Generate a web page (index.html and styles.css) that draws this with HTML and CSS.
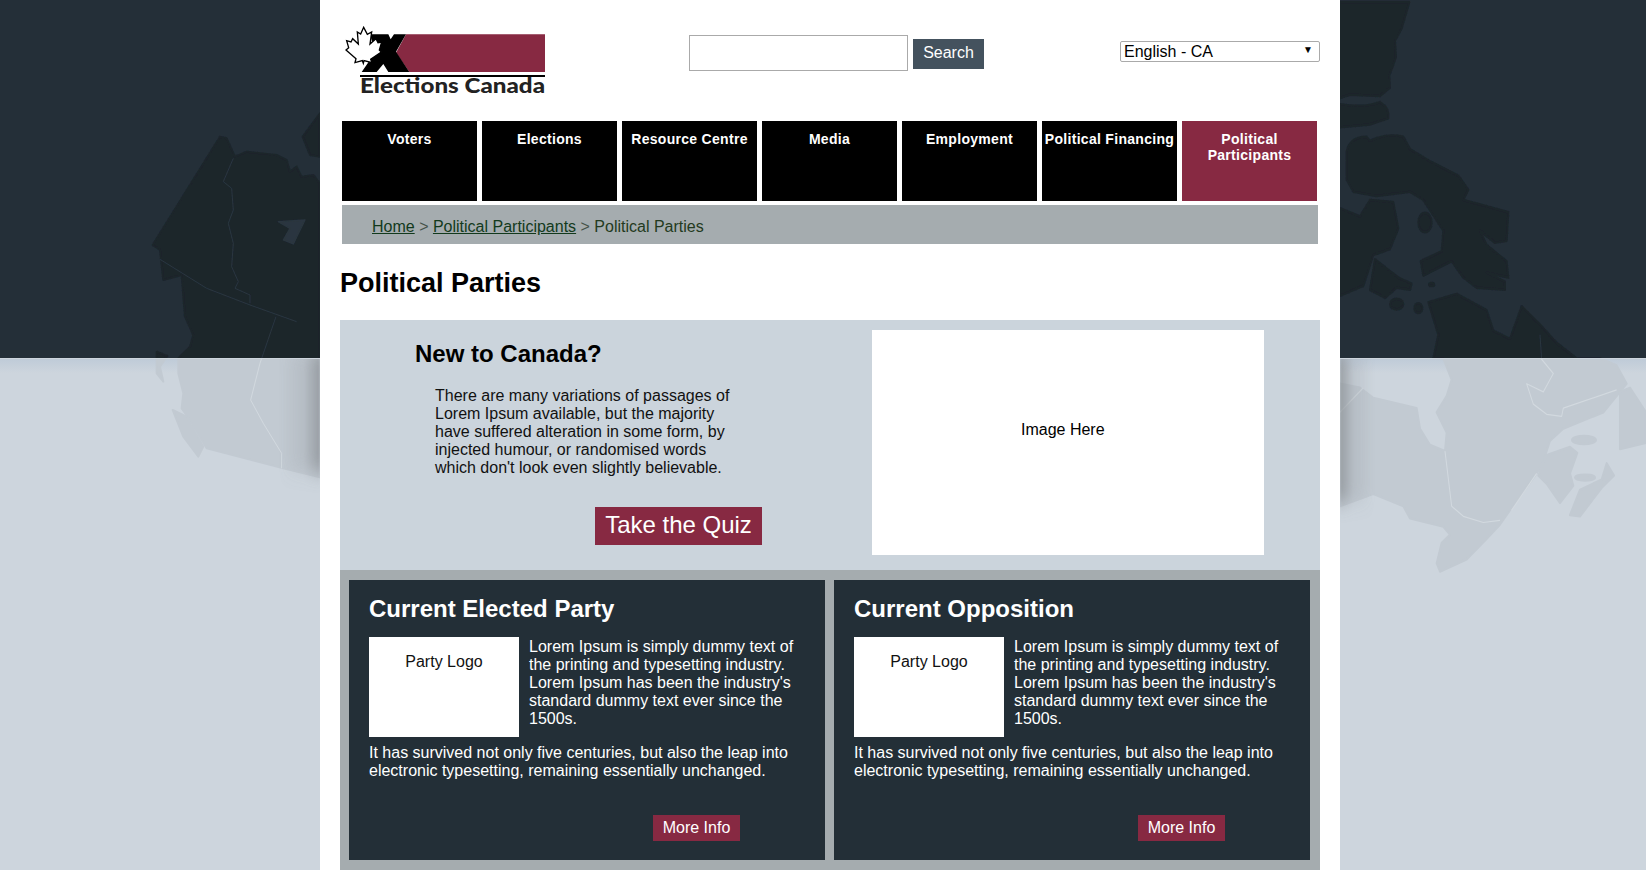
FILE: index.html
```html
<!DOCTYPE html>
<html lang="en">
<head>
<meta charset="utf-8">
<title>Political Parties - Elections Canada</title>
<link rel="stylesheet" href="styles.css">
</head>
<body>
<svg class="backdrop" width="1646" height="870" viewBox="0 0 1646 870" aria-hidden="true">
  <defs>
    <clipPath id="upper"><rect x="0" y="0" width="1646" height="358"/></clipPath>
    <clipPath id="lower"><rect x="0" y="359" width="1646" height="511"/></clipPath>
    <filter id="soft" x="-5%" y="-5%" width="110%" height="110%"><feGaussianBlur stdDeviation=".7"/></filter>
    <filter id="softY" x="-10%" y="-20%" width="120%" height="140%"><feGaussianBlur stdDeviation="1 9"/></filter>
    <linearGradient id="shadeL" x1="0" x2="1" y1="0" y2="0"><stop offset="0" stop-color="#8b9095" stop-opacity="0"/><stop offset=".6" stop-color="#8b9095" stop-opacity=".22"/><stop offset="1" stop-color="#8b9095" stop-opacity=".75"/></linearGradient>
    <linearGradient id="shadeR" x1="1" x2="0" y1="0" y2="0"><stop offset="0" stop-color="#8b9095" stop-opacity="0"/><stop offset=".6" stop-color="#8b9095" stop-opacity=".22"/><stop offset="1" stop-color="#8b9095" stop-opacity=".75"/></linearGradient>
    <linearGradient id="fadeTop" x1="0" x2="0" y1="0" y2="1"><stop offset="0" stop-color="#bfcbd8"/><stop offset="1" stop-color="#bfcbd8" stop-opacity="0"/></linearGradient>
    <g id="land">
      <g transform="translate(0,100) scale(.3333)">
        <path d="M660 110L680 115L705 170L740 155L830 165L860 180L870 215L890 200L905 230L940 225L960 250V1132L850 1105L620 1045L605 1020L570 960L545 925L550 880L535 820L535 775L570 740L580 705L555 650L545 525L490 540L480 450L458 435Z"/>
        <path d="M518 930L560 950L610 1040L595 1070L550 1010Z"/>
        <path d="M470 755L502 768L480 800L490 845L470 820Z"/>
        <path d="M960 40L908 110L930 165L960 170Z"/>
      </g>
      <g transform="translate(1330,0) scale(.3333,.4082)">
        <path d="M30 5H238L215 70L195 100L198 140L178 185L180 215L150 235L60 232L30 240Z"/>
        <path d="M30 255Q100 265 150 250Q180 265 175 290L120 305L30 312Z"/>
        <path d="M50 370Q60 335 110 335L120 345Q170 325 220 335L240 365L300 395L385 430L415 465L400 490L470 505L535 520L530 590L495 595L450 565L470 600L530 640L535 680L470 668L525 690L525 710L440 705L400 680L365 640L280 675L272 640L335 615L340 565L280 490L240 470L140 480L70 470L50 440Z"/>
        <path d="M30 510L90 530L120 490L190 495L205 560L180 610L130 625L100 700L30 725Z"/>
        <path d="M135 635L205 680L245 695L240 710L200 705L165 730L120 710Z"/>
        <ellipse cx="200" cy="745" rx="20" ry="13"/>
        <circle cx="265" cy="755" r="12"/>
        <ellipse cx="285" cy="545" rx="20" ry="24"/>
        <ellipse cx="305" cy="697" rx="8" ry="4"/>
        <path d="M295 740L380 720L470 760L490 810L540 830L575 750L630 795L680 840L740 878H810L860 895L890 940L870 960L820 1010L700 1050L660 1080L640 1130L620 1160L540 1250L510 1285L470 1320L410 1370L330 1400L320 1380L335 1330L360 1310L340 1290L240 1270L220 1240L130 1210L30 1240V940L90 950L130 975L260 1000L270 1050L300 1090L345 1105L350 1060L320 1010L350 970L365 930L340 878H310L325 820Z"/>
        <path d="M870 960L900 950L948 1010V1085L870 1100Z"/>
        <path d="M625 1165L650 1115L720 1095L742 1110L720 1160L730 1190L690 1232L650 1185Z"/>
        <path d="M720 1262L750 1200L815 1175L830 1135L852 1165L815 1195L750 1265Z"/>
        <ellipse cx="762" cy="1078" rx="36" ry="10"/>
        <ellipse cx="765" cy="1170" rx="30" ry="7"/>
      </g>
    </g>
    <g id="borders">
      <g transform="translate(0,100) scale(.3333)">
        <path d="M700 175L670 245L695 265L700 330L685 370L700 430L695 500L715 545L705 565L750 585V610M480 478L620 565L750 615L890 665M828 650L780 790L752 900L790 970L845 1060L845 1105"/>
      </g>
      <g transform="translate(1330,0) scale(.3333,.4082)">
        <path d="M30 1010L100 950M630 820L635 880L670 915L640 960L590 940L610 990L650 1015L695 1020L700 1000L860 955M345 1105L365 1240L400 1265L460 1280L510 1275M545 1250L620 1160"/>
      </g>
    </g>
  </defs>
  <rect class="sky" width="1646" height="358"/>
  <rect class="ground" y="358" width="1646" height="512"/>
  <rect y="359" width="1646" height="14" fill="url(#fadeTop)"/>
  <g clip-path="url(#upper)">
    <g filter="url(#soft)">
      <use href="#land" class="land-dark"/>
      <use href="#borders" class="line-dark"/>
      <g transform="translate(0,100) scale(.3333)"><path class="lake-dark" d="M835 365L915 360L880 432L850 420L870 385Z"/></g>
    </g>
  </g>
  <g clip-path="url(#lower)">
    <g filter="url(#soft)">
      <use href="#land" class="land-light"/>
      <use href="#borders" class="line-light"/>
    </g>
    <rect x="280" y="352" width="40" height="120" fill="url(#shadeL)" filter="url(#softY)"/>
    <rect x="1340" y="352" width="34" height="150" fill="url(#shadeR)" filter="url(#softY)"/>
  </g>
</svg>

<div class="page">
  <header class="masthead">
    <a class="logo" href="#" aria-label="Elections Canada">
      <svg width="202" height="76" viewBox="75 75 606 228">
        <path class="logo-red" d="M258 103H675V216H268L228 158Z"/>
        <path class="logo-black" d="M150 103H205L212 118L222 103H258L228 155L268 216H205L190 192L170 216H125L165 158Z"/>
        <path class="logo-leaf" d="M131 82L142 103L155 96L150 132L168 116L174 128L185 126L178 150L184 156L152 178L156 188L132 182L130 190L127 182L105 188L108 176L78 150L86 143L80 122L93 126L98 116L115 132L112 96L122 102Z"/>
        <rect class="logo-black" x="120" y="225" width="555" height="6"/>
        <text class="logo-text" x="120" y="278" textLength="555" lengthAdjust="spacingAndGlyphs">Elections Canada</text>
      </svg>
    </a>
    <form class="search">
      <input class="search-input" type="text" aria-label="Search">
      <button class="search-btn" type="button">Search</button>
    </form>
    <div class="lang">
      <select class="lang-select" aria-label="Language"><option>English - CA</option></select>
      <span class="lang-arrow">▼</span>
    </div>
  </header>

  <nav class="mainnav">
    <a class="tab" href="#">Voters</a>
    <a class="tab" href="#">Elections</a>
    <a class="tab" href="#">Resource Centre</a>
    <a class="tab" href="#">Media</a>
    <a class="tab" href="#">Employment</a>
    <a class="tab" href="#">Political Financing</a>
    <a class="tab tab-active" href="#">Political Participants</a>
  </nav>

  <div class="crumbs"><a href="#">Home</a> <span class="sep">&gt;</span> <a href="#">Political Participants</a> <span class="sep">&gt;</span> Political Parties</div>

  <h1 class="title">Political Parties</h1>

  <section class="hero">
    <div class="hero-copy">
      <h2 class="hero-heading">New to Canada?</h2>
      <p class="hero-text">There are many variations of passages of Lorem Ipsum available, but the majority have suffered alteration in some form, by injected humour, or randomised words which don't look even slightly believable.</p>
      <a class="quiz" href="#">Take the Quiz</a>
    </div>
    <div class="hero-image"><span>Image Here</span></div>
  </section>

  <section class="cards">
    <article class="card">
      <h2 class="card-heading">Current Elected Party</h2>
      <div class="card-top">
        <div class="party-logo">Party Logo</div>
        <p class="card-text">Lorem Ipsum is simply dummy text of the printing and typesetting industry. Lorem Ipsum has been the industry's standard dummy text ever since the 1500s.</p>
      </div>
      <p class="card-more">It has survived not only five centuries, but also the leap into electronic typesetting, remaining essentially unchanged.</p>
      <a class="more" href="#">More Info</a>
    </article>
    <article class="card">
      <h2 class="card-heading">Current Opposition</h2>
      <div class="card-top">
        <div class="party-logo">Party Logo</div>
        <p class="card-text">Lorem Ipsum is simply dummy text of the printing and typesetting industry. Lorem Ipsum has been the industry's standard dummy text ever since the 1500s.</p>
      </div>
      <p class="card-more">It has survived not only five centuries, but also the leap into electronic typesetting, remaining essentially unchanged.</p>
      <a class="more" href="#">More Info</a>
    </article>
  </section>
</div>
</body>
</html>
```
FILE: styles.css
```css
* { box-sizing: border-box; }
html, body { margin: 0; height: 870px; overflow: hidden; }
body { font-family: "Liberation Sans", Arial, sans-serif; font-size: 16px; color: #000; background: #cdd5dd; }

.backdrop { position: absolute; left: 0; top: 0; z-index: -1; display: block; }
.sky { fill: #242f38; }
.ground { fill: #cdd5dd; }
.land-dark { fill: #1c252c; stroke: #1c252c; stroke-width: 6; stroke-linejoin: round; }
.land-light { fill: #c2cad2; stroke: #c2cad2; stroke-width: 6; stroke-linejoin: round; }
.lake-dark { fill: #2a363f; stroke: #2a363f; stroke-width: 4; stroke-linejoin: round; }
.line-dark { fill: none; stroke: #2a363f; stroke-width: 3; stroke-linejoin: round; }
.line-light { fill: none; stroke: #d2d9df; stroke-width: 3; stroke-linejoin: round; }

.page { margin-left: 320px; width: 1020px; height: 870px; background: #fff; overflow: hidden; }

.masthead { display: flex; align-items: flex-start; height: 121px; }
.logo { display: block; margin: 25px 0 0 25px; height: 76px; }
.logo svg { display: block; }
.logo-red { fill: #872942; }
.logo-black { fill: #000; }
.logo-leaf { fill: #fff; stroke: #000; stroke-width: 4; }
.logo-text { font-family: Lato, "Open Sans", sans-serif; font-weight: 900; font-size: 62px; fill: #222; }

.search { display: flex; align-items: flex-start; margin: 35px 0 0 142px; }
.search-input { width: 219px; height: 36px; border: 1px solid #aaa; background: #fff; padding: 0; margin: 0; }
.search-btn { margin: 4px 0 0 5px; width: 71px; height: 30px; border: 0; padding: 0 0 2px; background: #44525e; color: #fff; font: 16px "Liberation Sans", Arial, sans-serif; }

.lang { position: relative; margin: 41px 0 0 136px; width: 200px; height: 21px; }
.lang-select { appearance: none; display: block; width: 200px; height: 21px; padding: 0 0 0 3px; margin: 0; border: 1px solid #aaa; border-radius: 2px; background: #fff; color: #000; font: 16px "Liberation Sans", Arial, sans-serif; }
.lang-arrow { position: absolute; right: 7px; top: 4px; font-size: 10px; line-height: 10px; pointer-events: none; }

.mainnav { display: flex; gap: 5px; margin-left: 22px; }
.tab { display: block; width: 135px; height: 80px; padding: 10px 2px 0; background: #000; color: #fff; font-size: 14px; line-height: 16px; font-weight: 700; letter-spacing: .3px; text-align: center; text-decoration: none; }
.tab-active { background: #872942; padding-left: 20px; padding-right: 20px; }

.crumbs { margin: 4px 0 0 22px; width: 976px; height: 39px; padding: 13px 0 0 30px; background: #a5acaf; color: #233a20; line-height: 18px; }
.crumbs a { color: #123a1c; }
.sep { color: #46534a; }

.title { margin: 0; padding: 0 0 0 20px; height: 76px; font-size: 27px; line-height: 76px; font-weight: 700; color: #000; }
.title { line-height: 78px; }

.hero { display: flex; margin-left: 20px; width: 980px; height: 250px; background: #cbd4dc; }
.hero-copy { width: 532px; padding: 20px 0 0 75px; }
.hero-heading { margin: 0; font-size: 24px; line-height: 28px; font-weight: 700; }
.hero-text { margin: 19px 0 0 20px; width: 310px; line-height: 18px; font-size: 16px; color: #111; }
.quiz { display: block; margin: 30px 0 0 180px; width: 167px; height: 38px; background: #872942; color: #fff; font-size: 24px; line-height: 36px; text-align: center; text-decoration: none; }
.hero-image { margin-top: 10px; width: 392px; height: 225px; background: #fff; padding: 91px 0 0 149px; line-height: 18px; }

.cards { display: flex; gap: 9px; margin-left: 20px; width: 980px; height: 300px; padding: 10px 9px; background: #a5acaf; }
.card { width: 476px; height: 280px; padding: 17px 20px 0; background: #232f37; color: #fff; }
.card-heading { margin: 0; font-size: 24px; line-height: 24px; font-weight: 700; }
.card-top { display: flex; gap: 10px; margin-top: 16px; height: 100px; }
.party-logo { flex: none; width: 150px; height: 100px; padding-top: 16px; background: #fff; color: #111; line-height: 18px; text-align: center; }
.card-text { margin: 1px 0 0; line-height: 18px; }
.card-more { margin: 7px 0 0; line-height: 18px; }
.more { display: block; margin: 35px 0 0 284px; width: 87px; height: 26px; background: #872942; color: #fff; line-height: 25px; text-align: center; text-decoration: none; }
```
